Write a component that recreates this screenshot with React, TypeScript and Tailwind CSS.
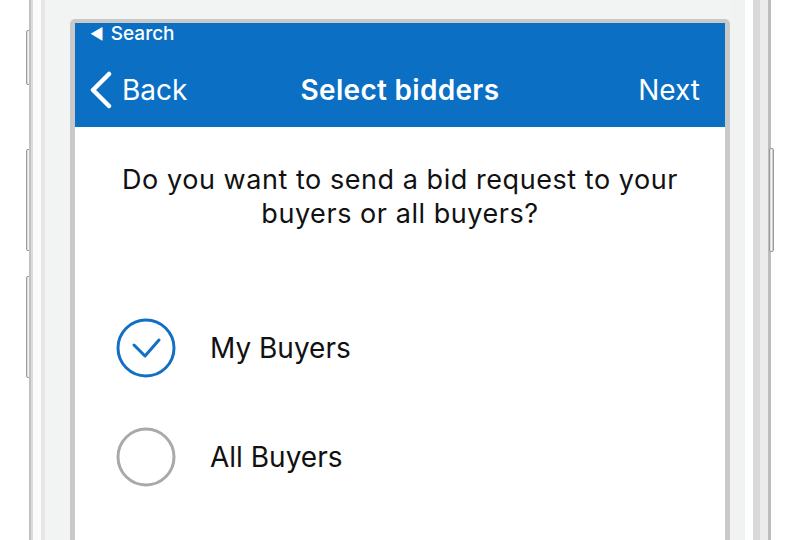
import * as React from "react";

interface BidderOption {
  id: number;
  label: string;
  selected: boolean;
}

const options: BidderOption[] = [
  { id: 1, label: "My Buyers", selected: true },
  { id: 2, label: "All Buyers", selected: false },
];

const SideButton: React.FC<{ className: string }> = ({ className }) => (
  <div
    className={`w-[5px] rounded-[2px] border border-[#9a9a9a] bg-gradient-to-r from-[#d6d6d6] via-[#f4f4f4] to-[#bdbdbd] ${className}`}
  />
);

const Radio: React.FC<{ selected: boolean }> = ({ selected }) => (
  <svg width="60" height="60" viewBox="0 0 60 60" className="shrink-0">
    <circle
      cx="30"
      cy="30"
      r="28"
      fill="none"
      stroke={selected ? "#1170c4" : "#a9a9a9"}
      strokeWidth="3"
    />
    {selected && (
      <path
        d="M18 27 L29 38 L43 22"
        fill="none"
        stroke="#1170c4"
        strokeWidth="3"
        strokeLinecap="round"
        strokeLinejoin="round"
      />
    )}
  </svg>
);

const App: React.FC = () => {
  return (
    <div
      className="w-[800px] h-[540px] bg-white flex overflow-hidden"
      style={{ fontFamily: "Inter, 'Noto Sans', sans-serif" }}
    >
      {/* left hardware buttons */}
      <div className="w-[29px] flex flex-col items-end">
        <SideButton className="mt-[30px] h-[55px] -mr-[2px]" />
        <SideButton className="mt-[64px] h-[102px] -mr-[2px]" />
        <SideButton className="mt-[25px] h-[102px] -mr-[2px]" />
      </div>

      {/* phone body */}
      <div className="w-[742px] h-full flex">
        {/* left bezel */}
        <div className="w-[41px] h-full flex">
          <div className="w-[2px] bg-[#c2c2c2]" />
          <div className="w-[2px] bg-[#dcdcdc]" />
          <div className="w-[8px] bg-[#fbfbfb]" />
          <div className="w-[4px] bg-[#e6e6e6]" />
          <div className="flex-1 bg-[#f2f3f3]" />
        </div>

        {/* screen column */}
        <div className="w-[660px] h-full flex flex-col bg-[#f2f3f3] pt-[19px]">
          <div className="flex-1 flex flex-col border-[#c9c9c9] border-l-[5px] border-r-[5px] border-t-[4px] rounded-t-[5px] bg-white">
            {/* header */}
            <div className="h-[104px] bg-[#0b6fc4] text-white flex flex-col">
              <div className="h-[21px] flex items-center px-[15px] gap-[7px]">
                <span className="text-[15px] leading-none">&#9664;</span>
                <span className="text-[19px] font-medium leading-none">Search</span>
              </div>
              <div className="flex-1 flex items-center justify-between px-[14px] pt-[8px]">
                <div className="flex items-center gap-[9px] w-[150px]">
                  <svg width="24" height="38" viewBox="0 0 24 38">
                    <path
                      d="M20 3 L4 19 L20 35"
                      fill="none"
                      stroke="white"
                      strokeWidth="4.5"
                      strokeLinecap="round"
                      strokeLinejoin="round"
                    />
                  </svg>
                  <span className="text-[28px] leading-none">Back</span>
                </div>
                <span className="text-[28px] font-semibold leading-none tracking-[0.3px]">
                  Select bidders
                </span>
                <div className="w-[150px] flex justify-end pr-[11px]">
                  <span className="text-[28px] leading-none">Next</span>
                </div>
              </div>
            </div>

            {/* body */}
            <div className="flex flex-col">
              <p className="mt-[36px] text-center text-[27px] leading-[34px] tracking-[0.55px] text-[#111] px-[30px]">
                Do you want to send a bid request to your buyers or all buyers?
              </p>
              <div className="mt-[87px] flex flex-col gap-[49px] pl-[41px]">
                {options.map((option) => (
                  <div key={option.id} className="flex items-center gap-[34px]">
                    <Radio selected={option.selected} />
                    <span className="text-[28px] text-[#111] leading-none">{option.label}</span>
                  </div>
                ))}
              </div>
            </div>
          </div>
        </div>

        {/* right bezel */}
        <div className="w-[41px] h-full flex">
          <div className="w-[15px] bg-[#f1f2f2]" />
          <div className="w-[8px] bg-white" />
          <div className="w-[7px] bg-[#d9d9d9]" />
          <div className="w-[8px] bg-[#ececec]" />
          <div className="w-[3px] bg-[#bdbdbd]" />
        </div>
      </div>

      {/* right hardware button */}
      <div className="w-[29px] flex flex-col">
        <SideButton className="mt-[148px] h-[104px] -ml-[2px]" />
      </div>
    </div>
  );
};

export default App;
